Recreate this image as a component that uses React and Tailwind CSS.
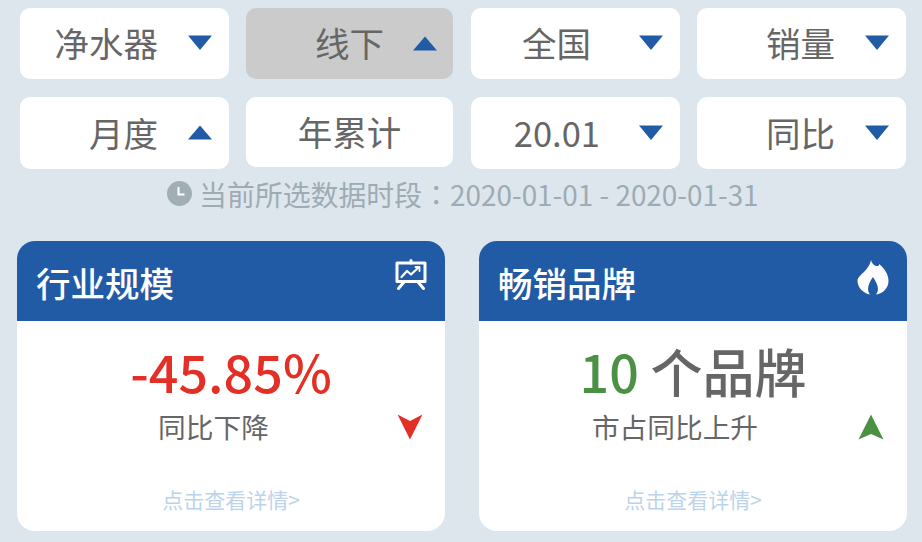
const FONT = "font-['Noto_Sans_CJK_SC','Noto_Sans',sans-serif]";

function Caret({ up, className }) {
  return (
    <svg width="24" height="15" viewBox="0 0 24 15" className={`shrink-0 ${className}`}>
      <path d={up ? "M12 0.5L24 14.5H0Z" : "M0 0.5H24L12 15Z"} fill="#215ba6" />
    </svg>
  );
}

function FilterButton({ label, up, active, className, textClass, caretClass }) {
  return (
    <div
      className={`flex items-center rounded-[10px] ${active ? "bg-[#cbcbcb]" : "bg-white"} ${className}`}
    >
      <span className={`text-[34.5px] leading-none text-[#666] ${textClass}`}>{label}</span>
      <Caret up={up} className={caretClass} />
    </div>
  );
}

function ChartIcon() {
  return (
    <svg width="32" height="32" viewBox="0 0 32 32" fill="none" stroke="#fff" strokeLinecap="round" strokeLinejoin="round">
      <path d="M16 1.5V4" strokeWidth="3" />
      <rect x="2" y="4" width="28" height="18.5" strokeWidth="3" />
      <path d="M6.5 18L12 12L16 15.5L23.5 8.5" strokeWidth="2.2" />
      <path d="M20.5 8H24.5V12" strokeWidth="1.8" />
      <path d="M9 23L3.5 29.5M23 23L28.5 29.5" strokeWidth="3" />
    </svg>
  );
}

function FlameIcon() {
  return (
    <svg width="32" height="36" viewBox="0 0 32 36">
      <path
        fill="#fff"
        d="M14 1C15 5 18 7.5 21 7C22 6.5 22 6 22 5C27 9 31.5 15 31.5 22C31.5 29 26 34.5 19 35.5C22 32 22 27 16 18C11 25 9.5 31 13 35.5C6 34.5 0.5 28 0.5 22C0.5 16 12 12 14 1Z"
      />
    </svg>
  );
}

function Card({ title, icon, big, sub, arrow }) {
  return (
    <div className="w-[428px] h-[290px] rounded-[18px] bg-white overflow-hidden flex flex-col">
      <div className="h-[80px] bg-[#215ba6] flex items-start justify-between pl-[19px] pr-[18px]">
        <span className="mt-[19px] text-[34.5px] leading-[44px] text-white font-medium">{title}</span>
        <span className="mt-[18px]">{icon}</span>
      </div>
      <div className="mt-[17px] h-[66px] flex items-center justify-center leading-none">{big}</div>
      <div className="mt-[2px] h-[42px] flex items-center pl-[13px] pr-[21px]">
        <span className="flex-1 text-center text-[27.7px] leading-none text-[#666]">{sub}</span>
        {arrow}
      </div>
      <div className="mt-[37px] text-center text-[21px] leading-[28px] text-[#bcd4eb]">点击查看详情&gt;</div>
    </div>
  );
}

export default function App() {
  return (
    <div className={`w-[922px] h-[542px] overflow-hidden bg-[#dde6ed] ${FONT}`}>
      <div className="pt-[8px] pl-[20px] flex gap-x-[17px] items-start">
        <FilterButton label="净水器" className="w-[209px] h-[71px] justify-end pr-[17px]" textClass="mr-[30px] -mt-[2px]" caretClass="-mt-[2px]" />
        <FilterButton label="线下" up active className="w-[207px] h-[71px] justify-end pr-[16px]" textClass="mr-[29px] -mt-[2px]" caretClass="-mt-[1px]" />
        <FilterButton label="全国" className="w-[209px] h-[71px] justify-end pr-[17px] ml-[1px]" textClass="mr-[48px] -mt-[2px]" caretClass="-mt-[2px]" />
        <FilterButton label="销量" className="w-[209px] h-[71px] justify-end pr-[17px]" textClass="mr-[30px] -mt-[2px]" caretClass="-mt-[2px]" />
      </div>
      <div className="mt-[18px] pl-[20px] flex gap-x-[17px] items-start">
        <FilterButton label="月度" up className="w-[209px] h-[72px] justify-end pr-[17px]" textClass="mr-[30px] -mt-[2px]" caretClass="-mt-[1px]" />
        <div className="w-[207px] h-[70px] rounded-[10px] bg-white flex items-center justify-center text-[34.5px] leading-none text-[#666]">
          <span className="-mt-[2px]">年累计</span>
        </div>
        <FilterButton label="20.01" className="w-[209px] h-[72px] justify-end pr-[17px] ml-[1px]" textClass="mr-[39px] -mt-[2px]" caretClass="-mt-[1px]" />
        <FilterButton label="同比" className="w-[209px] h-[72px] justify-end pr-[17px]" textClass="mr-[30px] -mt-[2px]" caretClass="-mt-[1px]" />
      </div>
      <div className="mt-[8px] h-[36px] flex items-center pl-[167px]">
        <svg width="25" height="25" viewBox="0 0 25 25" className="-mt-[4px]">
          <circle cx="12.5" cy="12.5" r="12.5" fill="#a1aeb6" />
          <path d="M11.5 6V13.5H17.5" fill="none" stroke="#fff" strokeWidth="2" />
        </svg>
        <span className="ml-[7px] text-[27.9px] leading-none text-[#9eabb3] whitespace-nowrap">
          当前所选数据时段<span className="font-['Noto_Sans_CJK_TC',sans-serif]">：</span>2020-01-01 - 2020-01-31
        </span>
      </div>
      <div className="mt-[28px] pl-[17px] flex gap-x-[34px]">
        <Card
          title="行业规模"
          icon={<ChartIcon />}
          big={<span className="text-[52px] font-medium text-[#e32f25]">-45.85%</span>}
          sub="同比下降"
          arrow={
            <svg width="26" height="26" viewBox="0 0 26 26" className="mr-[1px]">
              <path d="M0.5 0.5L13 7L25.5 0.5L13 25.5Z" fill="#e32f25" />
            </svg>
          }
        />
        <Card
          title="畅销品牌"
          icon={<FlameIcon />}
          big={
            <span className="text-[52px] font-medium text-[#666]">
              <span className="text-[#4a9144]">10</span> 个品牌
            </span>
          }
          sub="市占同比上升"
          arrow={
            <svg width="26" height="26" viewBox="0 0 26 26" className="mr-[2px]">
              <path d="M13 0.5L25.5 25.5L13 20L0.5 25.5Z" fill="#4a9144" />
            </svg>
          }
        />
      </div>
    </div>
  );
}
